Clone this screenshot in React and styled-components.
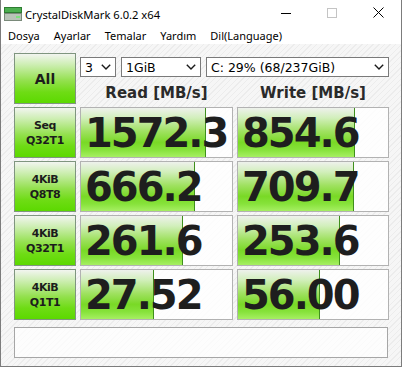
import React from 'react';
import styled, { createGlobalStyle } from 'styled-components';

const rows = [
  { label: ['Seq', 'Q32T1'], read: '1572.3', readBar: 125, write: '854.6', writeBar: 117 },
  { label: ['4KiB', 'Q8T8'], read: '666.2', readBar: 114, write: '709.7', writeBar: 116 },
  { label: ['4KiB', 'Q32T1'], read: '261.6', readBar: 102, write: '253.6', writeBar: 102 },
  { label: ['4KiB', 'Q1T1'], read: '27.52', readBar: 73, write: '56.00', writeBar: 82 },
];

const menu = ['Dosya', 'Ayarlar', 'Temalar', 'Yardım', 'Dil(Language)'];

const Chevron = () => (
  <svg width="10" height="6" viewBox="0 0 10 6">
    <path d="M0.8 0.8 L5 5 L9.2 0.8" fill="none" stroke="#1a1a1a" strokeWidth="1.4" />
  </svg>
);

const AppIcon = () => (
  <svg width="18" height="14" viewBox="0 0 18 14">
    <rect x="0.5" y="0.5" width="17" height="5" fill="#4caf50" stroke="#2e7d32" />
    <rect x="0.5" y="6.5" width="17" height="7" fill="#b8c4b8" stroke="#7a8a7a" />
    <rect x="12" y="9" width="4" height="2" fill="#7ee07e" />
  </svg>
);

export default function App() {
  return (
    <>
      <GlobalStyle />
      <Window>
        <TitleBar>
          <IconSlot><AppIcon /></IconSlot>
          <Title>CrystalDiskMark 6.0.2 x64</Title>
          <Controls>
            <CaptionButton>
              <svg width="10" height="10" viewBox="0 0 10 10"><path d="M0 5.5 H10" stroke="#000" strokeWidth="1" /></svg>
            </CaptionButton>
            <CaptionButton>
              <svg width="10" height="10" viewBox="0 0 10 10"><rect x="0.5" y="0.5" width="9" height="9" fill="none" stroke="#c4c4c4" /></svg>
            </CaptionButton>
            <CaptionButton>
              <svg width="11" height="11" viewBox="0 0 11 11"><path d="M0.5 0.5 L10.5 10.5 M10.5 0.5 L0.5 10.5" stroke="#000" strokeWidth="1" /></svg>
            </CaptionButton>
          </Controls>
        </TitleBar>
        <MenuBar>
          {menu.map((m) => <MenuItem key={m}>{m}</MenuItem>)}
        </MenuBar>
        <Client>
          <Grid>
            <AllButton>All</AllButton>
            <TopRight>
              <ComboRow>
                <Combo width="36px"><span>3</span><Chevron /></Combo>
                <Combo width="80px"><span>1GiB</span><Chevron /></Combo>
                <Combo grow><span>C: 29% (68/237GiB)</span><Chevron /></Combo>
              </ComboRow>
              <Header>Read [MB/s]</Header>
              <Header>Write [MB/s]</Header>
            </TopRight>
            {rows.map((r) => (
              <React.Fragment key={r.label.join() + r.read}>
                <LabelButton>
                  {r.label[0]}<br />{r.label[1]}
                </LabelButton>
                <ValueBox>
                  <Bar style={{ width: r.readBar + 'px' }} />
                  <Value>{r.read}</Value>
                </ValueBox>
                <ValueBox>
                  <Bar style={{ width: r.writeBar + 'px' }} />
                  <Value>{r.write}</Value>
                </ValueBox>
              </React.Fragment>
            ))}
          </Grid>
          <Comment />
        </Client>
      </Window>
    </>
  );
}

const GlobalStyle = createGlobalStyle`
  body {
    margin: 0;
    background: #ffffff;
  }
`;

const Window = styled.div`
  width: 402px;
  height: 367px;
  box-sizing: border-box;
  border: 1px solid #7c7c7c;
  border-top: none;
  display: flex;
  flex-direction: column;
  background: #ffffff;
  overflow: hidden;
`;

const TitleBar = styled.div`
  height: 29px;
  display: flex;
  align-items: center;
  background: #ffffff;
`;

const IconSlot = styled.div`
  width: 18px;
  height: 14px;
  margin-left: 3px;
  margin-top: -1px;
  display: flex;
`;

const Title = styled.div`
  margin-left: 3px;
  font-family: "Noto Sans", sans-serif;
  font-size: 11.2px;
  color: #000;
  flex: 1;
`;

const Controls = styled.div`
  display: flex;
  height: 100%;
`;

const CaptionButton = styled.div`
  width: 46px;
  height: 100%;
  display: flex;
  align-items: center;
  justify-content: center;
  margin-top: -2px;
`;

const MenuBar = styled.div`
  height: 15px;
  display: flex;
  align-items: center;
  gap: 14px;
  padding-left: 7px;
  background: #ffffff;
`;

const MenuItem = styled.span`
  font-family: "Noto Sans", sans-serif;
  font-size: 11px;
  color: #000;
  line-height: 15px;
  margin-top: -2px;
`;

const Client = styled.div`
  flex: 1;
  padding: 9px 0 0 13px;
  background: repeating-linear-gradient(135deg, #f6f6f6 0 3px, #ececec 3px 4px);
`;

const Grid = styled.div`
  display: grid;
  grid-template-columns: 62px 153px 152px;
  grid-auto-rows: 51px;
  column-gap: 4px;
  row-gap: 3px;
`;

const greenButton = `
  box-sizing: border-box;
  border: 1px solid #7f957f;
  background: linear-gradient(to bottom, #f2f5f0 0%, #cdeeb2 22%, #92e04c 55%, #6edc14 78%, #5cd900 100%);
  color: #1c1c1c;
  font-family: "DejaVu Sans", sans-serif;
  font-weight: bold;
  display: flex;
  align-items: center;
  justify-content: center;
  text-align: center;
`;

const AllButton = styled.div`
  ${greenButton}
  font-size: 14px;
`;

const LabelButton = styled.div`
  ${greenButton}
  font-size: 11px;
  line-height: 15px;
  letter-spacing: -0.4px;
`;

const TopRight = styled.div`
  grid-column: 2 / span 2;
  display: grid;
  grid-template-columns: 153px 152px;
  grid-template-rows: 20px 1fr;
  column-gap: 4px;
  padding-top: 4px;
`;

const ComboRow = styled.div`
  grid-column: 1 / -1;
  display: flex;
  gap: 5px;
`;

const Combo = styled.div`
  box-sizing: border-box;
  width: ${(p) => p.width || 'auto'};
  flex: ${(p) => (p.grow ? 1 : 'none')};
  height: 20px;
  border: 1px solid #7a7a7a;
  background: #ffffff;
  display: flex;
  align-items: center;
  justify-content: space-between;
  padding: 0 4px 0 4px;
  font-family: "DejaVu Sans", sans-serif;
  font-size: 12.5px;
  color: #000;
`;

const Header = styled.div`
  align-self: end;
  line-height: 22px;
  text-align: center;
  font-family: "DejaVu Sans", sans-serif;
  font-weight: bold;
  font-size: 15px;
  color: #2a2a2a;
`;

const ValueBox = styled.div`
  position: relative;
  box-sizing: border-box;
  border: 1px solid #b2b2b2;
  background: rgba(255, 255, 255, 0.82);
  display: flex;
  align-items: center;
  overflow: hidden;
`;

const Bar = styled.div`
  position: absolute;
  left: 0;
  top: 0;
  bottom: 0;
  box-sizing: border-box;
  border-right: 1px solid #3f8f1c;
  background: linear-gradient(to bottom, #eef1ec 0%, #d2efbc 20%, #9fe160 48%, #79d926 70%, #86e23a 85%, #a6ef62 100%);
`;

const Value = styled.div`
  position: relative;
  padding-left: 4px;
  font-family: "DejaVu Sans", sans-serif;
  font-weight: bold;
  font-size: 40px;
  letter-spacing: -2px;
  color: #1e1e1e;
  line-height: 1;
`;

const Comment = styled.div`
  box-sizing: border-box;
  width: 374px;
  height: 31px;
  margin-top: 7px;
  border: 1px solid #a6a6a6;
  background: rgba(255, 255, 255, 0.75);
`;
